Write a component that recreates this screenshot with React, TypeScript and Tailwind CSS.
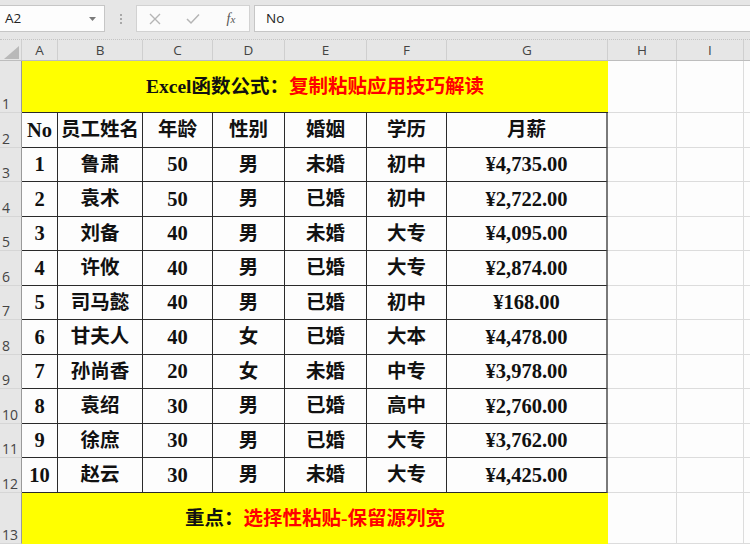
import React from "react";

const colLetters = ["A", "B", "C", "D", "E", "F", "G", "H", "I"];
const colWidths = ["w-[36px]", "w-[85px]", "w-[70px]", "w-[72px]", "w-[82px]", "w-[80px]", "w-[161px]", "w-[69px]", "w-[67px]"];

const rows = [
  ["1", "鲁肃", "50", "男", "未婚", "初中", "¥4,735.00"],
  ["2", "袁术", "50", "男", "已婚", "初中", "¥2,722.00"],
  ["3", "刘备", "40", "男", "未婚", "大专", "¥4,095.00"],
  ["4", "许攸", "40", "男", "已婚", "大专", "¥2,874.00"],
  ["5", "司马懿", "40", "男", "已婚", "初中", "¥168.00"],
  ["6", "甘夫人", "40", "女", "已婚", "大本", "¥4,478.00"],
  ["7", "孙尚香", "20", "女", "未婚", "中专", "¥3,978.00"],
  ["8", "袁绍", "30", "男", "已婚", "高中", "¥2,760.00"],
  ["9", "徐庶", "30", "男", "已婚", "大专", "¥3,762.00"],
  ["10", "赵云", "30", "男", "未婚", "大专", "¥4,425.00"],
];

const headers = ["No", "员工姓名", "年龄", "性别", "婚姻", "学历", "月薪"];

const rowHeights = ["h-[35px]", "h-[34px]", "h-[35px]", "h-[34px]", "h-[35px]", "h-[34px]", "h-[35px]", "h-[34px]", "h-[35px]", "h-[34px]", "h-[35px]"];

const cellFont = { fontFamily: '"Liberation Serif", "Noto Sans CJK SC", serif' };
const uiFont = { fontFamily: '"Open Sans", "Liberation Sans", sans-serif' };

// latin cells (numbers, money) are a touch bigger than the CJK ones
const isLatin = (s: string) => /^[A-Za-z0-9¥,.]+$/.test(s);

function RowHead({ n, h }: { n: number; h: string }) {
  return (
    <div
      className={`${h} w-[22px] shrink-0 bg-[#e6e6e6] border-r border-b border-r-[#9a9a9a] border-b-[#d6d6d6] flex items-end pl-[2px] pb-[1px] text-[14px] leading-none text-[#444]`}
      style={uiFont}
    >
      {n}
    </div>
  );
}

function EmptyCells({ h }: { h: string }) {
  return (
    <>
      <div className={`${h} w-[69px] shrink-0 border-r border-b border-[#dcdcdc]`} />
      <div className={`${h} w-[67px] shrink-0 border-r border-b border-[#dcdcdc]`} />
      <div className={`${h} flex-1 border-b border-[#dcdcdc]`} />
    </>
  );
}

function DataRow({ cells, h, n }: { cells: string[]; h: string; n: number }) {
  return (
    <div className="flex">
      <RowHead n={n} h={h} />
      {cells.map((c, i) => (
        <div
          key={i}
          className={`${h} ${colWidths[i]} shrink-0 border-b border-b-[#2a2a2a] ${
            i === 6 ? "border-r-2 border-r-[#7a7a7a]" : "border-r border-r-[#2a2a2a]"
          } ${isLatin(c) ? "text-[20.5px]" : "text-[19.5px]"} flex items-center justify-center font-bold text-[#111] whitespace-nowrap`}
          style={cellFont}
        >
          {c}
        </div>
      ))}
      <EmptyCells h={h} />
    </div>
  );
}

export default function App() {
  return (
    <div className="w-[750px] h-[544px] overflow-hidden bg-[#fdfdfd] select-none">
      {/* Formula bar */}
      <div className="h-[40px] bg-[#e6e6e6] border-b border-dotted border-[#c4c4c4] flex items-start pt-[5px]" style={uiFont}>
        <div className="w-[106px] h-[27px] -ml-px bg-[#fdfdfd] border border-[#c6c6c6] flex items-center pl-[5px] pr-[8px] text-[13.5px] text-[#222]">
          <span className="flex-1">A2</span>
          <svg width="7" height="4" viewBox="0 0 7 4">
            <path d="M0 0 L7 0 L3.5 4 Z" fill="#7a7a7a" />
          </svg>
        </div>
        <div className="w-[31px] h-[27px] flex flex-col items-center justify-center gap-[2px]">
          <span className="w-[2px] h-[2px] bg-[#a8a8a8]" />
          <span className="w-[2px] h-[2px] bg-[#a8a8a8]" />
          <span className="w-[2px] h-[2px] bg-[#a8a8a8]" />
        </div>
        <div className="w-[114px] h-[27px] bg-[#fbfbfb] border border-[#d2d2d2] flex items-center">
          <div className="w-[36px] flex justify-center">
            <svg width="12" height="12" viewBox="0 0 12 12">
              <path d="M1 1 L11 11 M11 1 L1 11" stroke="#b5b5b5" strokeWidth="1.4" />
            </svg>
          </div>
          <div className="w-[40px] flex justify-center">
            <svg width="14" height="12" viewBox="0 0 14 12">
              <path d="M1 6 L5 10 L13 1.5" stroke="#b5b5b5" strokeWidth="1.5" fill="none" />
            </svg>
          </div>
          <div className="w-[36px] flex justify-center text-[14px] italic text-[#555]" style={{ fontFamily: '"Liberation Serif", serif' }}>
            <span>
              f<span className="text-[11px]">x</span>
            </span>
          </div>
        </div>
        <div className="w-[4px]" />
        <div className="flex-1 h-[27px] bg-[#fdfdfd] border border-[#c6c6c6] border-r-0 flex items-center pl-[11px] text-[13.5px] text-[#222]">
          No
        </div>
      </div>

      {/* Column headers */}
      <div className="flex h-[21px] bg-[#e6e6e6] border-b border-[#bdbdbd]" style={uiFont}>
        <div className="w-[22px] shrink-0 border-r border-[#cfcfcf] flex items-end justify-end pr-[2px] pb-[1px]">
          <svg width="15" height="13" viewBox="0 0 15 13">
            <path d="M15 0 L15 13 L0 13 Z" fill="#b9b9b9" />
          </svg>
        </div>
        {colLetters.map((l, i) => (
          <div
            key={l}
            className={`${colWidths[i]} shrink-0 border-r border-[#cfcfcf] flex items-center justify-center text-[13.5px] text-[#444]`}
          >
            {l}
          </div>
        ))}
        <div className="flex-1" />
      </div>

      {/* Row 1: title */}
      <div className="flex">
        <RowHead n={1} h="h-[52px]" />
        <div
          className="h-[52px] w-[586px] shrink-0 bg-[#ffff00] border-b border-b-[#2a2a2a] flex items-center justify-center text-[19.5px] font-bold whitespace-nowrap"
          style={cellFont}
        >
          <span className="text-[#111]">Excel函数公式：</span>
          <span className="text-[#ff0000]">复制粘贴应用技巧解读</span>
        </div>
        <EmptyCells h="h-[52px]" />
      </div>

      {/* Row 2: headers */}
      <DataRow cells={headers} h={rowHeights[0]} n={2} />
      {rows.map((r, i) => (
        <DataRow key={i} cells={r} h={rowHeights[i + 1]} n={i + 3} />
      ))}

      {/* Row 13: footer */}
      <div className="flex">
        <RowHead n={13} h="h-[51px]" />
        <div
          className="h-[51px] w-[586px] shrink-0 bg-[#ffff00] flex items-center justify-center text-[19.5px] font-bold whitespace-nowrap"
          style={cellFont}
        >
          <span className="text-[#111]">重点：</span>
          <span className="text-[#ff0000]">选择性粘贴-保留源列宽</span>
        </div>
        <EmptyCells h="h-[51px]" />
      </div>
    </div>
  );
}
